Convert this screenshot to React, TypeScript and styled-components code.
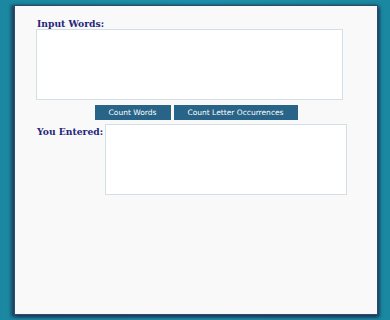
import styled, { createGlobalStyle } from "styled-components";

const GlobalStyle = createGlobalStyle`
  html, body {
    margin: 0;
    padding: 0;
    background: #1b8ca4;
  }
  body {
    width: 390px;
    height: 320px;
    overflow: hidden;
  }
`;

const Page = styled.div`
  width: 390px;
  height: 320px;
  padding: 6px 13px 6px 15px;
  box-sizing: border-box;
  background: linear-gradient(90deg, #1a88a0 0%, #1c91a9 50%, #1a88a0 100%);
`;

const Panel = styled.div`
  width: 362px;
  height: 308px;
  box-sizing: border-box;
  background: #f9f9f9;
  padding: 12px 0 0 21px;
  box-shadow: 0 0 0 1px #2a4d6c, -2px 1px 3px 2px rgba(30, 55, 90, 0.85),
    2px 2px 3px 1px rgba(30, 55, 90, 0.85);
`;

const Label = styled.label`
  display: block;
  font-family: "DejaVu Serif", Georgia, serif;
  font-weight: bold;
  font-size: 9.2px;
  line-height: 11px;
  color: #25257a;
  padding-left: 1px;
`;

const Area = styled.textarea<{ $width: number }>`
  display: block;
  width: ${({ $width }) => $width}px;
  height: 71px;
  box-sizing: border-box;
  margin: 0;
  background: #fff;
  border: 1px solid #d3dfe4;
  resize: none;
  outline: none;
`;

const Buttons = styled.div`
  display: flex;
  justify-content: center;
  gap: 3px;
  width: 320px;
  margin: 5px 0 4px;
`;

const Button = styled.button<{ $width: number }>`
  width: ${({ $width }) => $width}px;
  height: 15px;
  padding: 0;
  border: none;
  background: #286488;
  color: #fff;
  font-family: "DejaVu Sans", Verdana, sans-serif;
  font-size: 7.5px;
  cursor: pointer;
`;

const Row = styled.div`
  display: flex;
  align-items: flex-start;
  gap: 1px;

  ${Label} {
    padding-top: 2px;
    width: 67px;
    white-space: nowrap;
  }
`;

export default function App() {
  return (
    <>
      <GlobalStyle />
      <Page>
        <Panel>
          <Label>Input Words:</Label>
          <Area $width={307} />
          <Buttons>
            <Button $width={76}>Count Words</Button>
            <Button $width={124}>Count Letter Occurrences</Button>
          </Buttons>
          <Row>
            <Label>You Entered:</Label>
            <Area $width={242} />
          </Row>
        </Panel>
      </Page>
    </>
  );
}
